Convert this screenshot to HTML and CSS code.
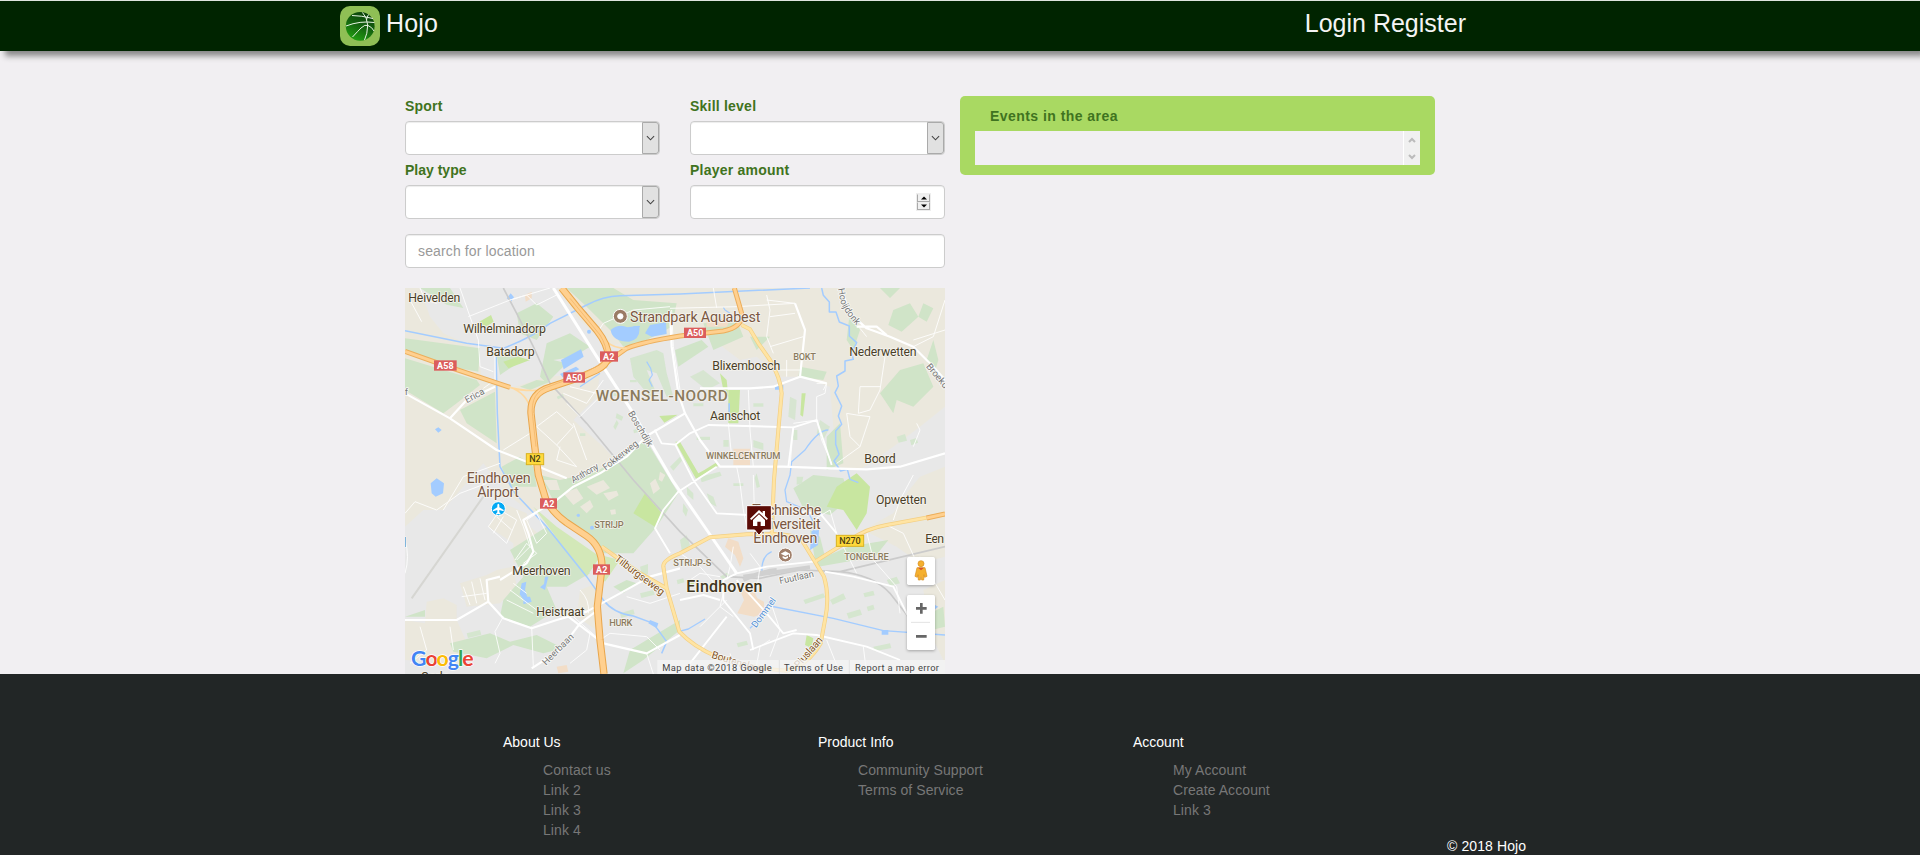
FILE: index.html
```html
<!DOCTYPE html>
<html lang="en">
<head>
<meta charset="utf-8">
<title>Hojo</title>
<link rel="stylesheet" href="styles.css">
</head>
<body>
<header class="topbar">
  <a class="brand">
    <svg class="logo" viewBox="0 0 40 40">
      <defs><linearGradient id="ball" x1="0.75" y1="0" x2="0.3" y2="1"><stop offset="0" stop-color="#0b3d0b"/><stop offset="0.5" stop-color="#14640f"/><stop offset="1" stop-color="#22a012"/></linearGradient></defs>
      <rect width="40" height="40" rx="10" fill="#8fbf55"/>
      <circle cx="20.2" cy="20.3" r="14.4" fill="url(#ball)"/>
      <g fill="none" stroke="#e6f2e2" stroke-width="1">
        <path d="M12 9.5Q21 9.5 33 12.5M6 20Q20 14.5 34.4 16.5M12.500 31Q18 25 21 22Q25 18 28 19.500Q32 21 34 25M22.500 6.500Q27 11 27.700 19Q27.500 28 24.500 34M28.500 8.500Q27 11 26.500 14"/>
      </g>
    </svg>
    <span>Hojo</span>
  </a>
  <nav class="nav"><a>Login</a> <a>Register</a></nav>
</header>

<main class="main">
  <section class="finder">
    <div class="fields">
      <div class="field"><label>Sport</label><div class="control"><span class="drop"><svg viewBox="0 0 10 6"><path d="M1 1l4 4 4-4"/></svg></span></div></div>
      <div class="field"><label>Skill level</label><div class="control"><span class="drop"><svg viewBox="0 0 10 6"><path d="M1 1l4 4 4-4"/></svg></span></div></div>
      <div class="field"><label class="tight">Play type</label><div class="control"><span class="drop"><svg viewBox="0 0 10 6"><path d="M1 1l4 4 4-4"/></svg></span></div></div>
      <div class="field"><label>Player amount</label><div class="control number"><span class="spin"><i><svg viewBox="0 0 6 4"><path d="M0 3.500L3 .5l3 3z"/></svg></i><i><svg viewBox="0 0 6 4"><path d="M0 .5h6l-3 3z"/></svg></i></span></div></div>
    </div>
    <input class="control search" type="text" placeholder="search for location">
    <svg class="map" viewBox="15 24 1620 1158">
      <rect x="15" y="24" width="1620" height="1158" fill="#e8e8e8"/>
      <g fill="#ebe8dd">
        <path d="M15 24H60L90 110 130 160 230 205 245 290 330 325 440 290 600 280 590 350 520 420 610 500 690 590 640 660 480 640 400 700 330 650 250 550 130 690 70 690 15 740z"/>
        <path d="M470 24H1635V380L1560 440 1480 500 1380 570 1310 560 1290 320 1200 290 1140 290 1070 230 1020 240 900 150 700 180 620 200 530 110z"/>
        <path d="M1480 700L1520 640 1560 590 1635 560V830L1560 850 1490 800 1390 750z"/>
        <path d="M1570 930L1635 900V1150L1590 1060z"/>
        <path d="M15 1020L75 1030 80 965 130 955 170 975 170 1020 210 1110 130 1150 15 1140zM180 910L260 885 290 870 340 860 350 920 300 970 200 980z"/>
        <path d="M265 740L310 670 380 700 390 740 440 780 430 810 340 850 340 790zM540 930l50-20 0 140-60-40z"/>
      </g>
      <g fill="#d0e4c8">
        <path d="M15 175L240 205 235 275 160 262 15 208zM15 235L230 300 240 315 170 370 130 400 15 330z"/>
        <path d="M180 390L285 335 290 490 200 430zM305 560L360 530 400 560 410 620 330 620z"/>
        <path d="M60 24h90l40 60-50-10zM350 100l60-30 50 40-50 70-50-20zM290 225l60-20 10 40-60 40zM360 320l50-20 40 5-60 25z"/>
        <path d="M500 24L640 24 700 60 830 70 815 140 740 180 670 200 640 160 560 80zM440 190l70-30 60 40-50 30-60 10 40 10-60 60-20-20z"/>
        <path d="M690 235l80-25 20 10 10 60 20 70-20 0-30-70-30-10 25 60-15 20-50-60z" opacity=".8"/>
        <path d="M420 585L480 600 590 575 730 480 750 500 835 640 770 740 700 820 600 820 560 770 480 700z"/>
        <path d="M330 810L440 740 570 880 500 920 440 920 470 990 390 1040 300 1010 310 960 370 890z"/>
        <path d="M825 210l80-30 20 20-90 60zM910 130l100-10 20 50-90 40zM1050 170l60 0-40 40z"/>
        <path d="M1200 260l80 15-10 25-75-10zM1280 470l40-40 10 120-50 20zM1350 90l30 60-20 60-20-30z"/>
        <path d="M1480 90l50-20 25 40-50 45-40-20zM1440 24h60l-30 30zM1570 70l30 15-20 40-25-15zM1600 180l15 60-15 50-20-50zM1500 270l70-20 30 70-60 60-50-20-10 40-40-60z"/>
        <path d="M1240 585l90 10 20 60-60 50-80-20-30-60zM1230 750l15 90 10 20 170-30 40-50-120 20-70 30-15-60zM1590 1000l40-20 5 60-40 10z"/>
        <path d="M15 1010l60-20 0 20zM150 1090l120-30 60 25 80-20 80 40-60 15-90-25-80 40-100-20zM640 920l40-20 30 10-40 30zM690 1110l150-90 0 30-110 90-60 40z"/>
        <path d="M1260 420l30 20-20 40-20-20zM1170 350l20 10-5 60-20-10zM870 290l40-20 50 40-40 20z" opacity=".7"/>
      </g>
      <g fill="#c8e6a0">
        <path d="M238 125l35-20 8 20-28 18zM310 245l45-15 35 10-65 25zM778 408l55-4-40 24zM826 485l14 0 55 95 18-10 35-22 6 10-66 38z"/>
        <path d="M700 700l35-60 52 62-20 40z"/>
        <path d="M400 680L470 740 600 830 560 890 490 800zM600 825l60 15-45 65-12-10z" fill="#d3e8b8"/>
        <path d="M985 330l35 0-5 100-30 0zM960 280l20 20 5 50-15-20zM1205 340l12 0-8 70-8-5z"/>
        <path d="M1310 620l60-40 40 40-10 80-30 50-40-60-50-10z"/>
        <path d="M1220 1065l20 10-5 30-20-10zM870 900l12-2 0 20-12 0z"/>
      </g>
      <g fill="#d5e6cf">
        <path d="M640 340h14v8h-14zM690 300h20v7h-20zM540 460h16v8h-16zM470 350l18-8 4 8-18 8zM890 470h40v10h-40zM970 480h16v20h-16zM1060 480l30 10v20l-30-8zM1180 450h12v30h-12zM880 370h30v9h-30zM1060 370h30v10h-30zM900 590l60-15 5 12-60 20zM1000 610h30v8h-30zM960 890l20-12 10 8-20 12zM1290 960l40-20 8 16-40 18zM1340 1000l40-12 6 16-40 12zM1400 980l20-6 4 14-20 6zM1210 960l60-20 6 12-60 20zM1460 900l30-10 10 20-30 8zM1420 1100l50-10 4 14-50 10zM830 900l20-5 3 12-20 6zM1010 1090l30-8 4 12-30 8zM1490 470l25-8 6 20-25 6zM1530 480l20-6 4 14-20 8zM1390 940l30-8 4 14-30 6zM660 1000l40-12 4 14-40 12zM720 940l40-10 4 14-40 10zM200 1060l40-10 4 14-40 10zM640 440l10-20 6 10-10 20zM700 450l30-10 0 12-28 8zM810 560l30-30 6 12-26 30zM650 400l20 10-5 12-18-8zM860 620l20 20 0 20-18-16zM920 640l20 10 10 30-20-10zM850 670l14 20-6 20-10-16zM1070 580l10 40-10 4-6-30zM840 780l20-14 10 30-24 20zM720 860l24-8 0 30-18 6zM1190 590l20 0-4 20-16 4z"/>
      </g>
      <g fill="#ebe8dd">
        <path d="M490 640l40-15 20 30-30 20zM540 680l30-20 10 20-20 20zM560 620l50-20 20 24-40 20zM610 640l40-8 6 14-30 16zM430 600l40 0 10 30-30 0zM750 610l16-14 14 30-20 16zM780 575l16 10-10 20-10-6zM630 690l16-2 2 14-14 2z"/>
      </g>
      <g fill="#f2ddc7">
        <path d="M1000 506h50v50h-50zM1022 935l30-20 20 40 20 10 0 35-30 10-50-10 20-40zM985 775l30 10 15 50-10 25-15-35-30-25zM920 110l70 10-10 20-60 0zM375 45l20-10 0 20-18 10zM470 1160l30-5 5 20-30 5z"/>
      </g>
      <g fill="#a3ccff">
        <path d="M632 150q25-20 50-8l35-5q8 40-30 48-50 0-55-35zM750 135l48-8 2 35-45 8-20-10zM483 240l60-32 8 22-60 38zM480 282l48-22 10 8-50 24zM320 55l12-15 10 12-8 12zM92 610l18-15 22 15-3 30-22 10-12-10zM105 448l10-6 10 8-10 8z"/>
        <path d="M365 910l14-5-4 25 10 30-8 8-18-25zM370 950l20 0 5 15-25 8zM435 890l10 0-10 40-15-8 12-10zM1235 752l22-2-3 45-24 15zM985 370h5v30h-5zM1125 315h25v14h-25zM1445 1050h20v14h-20zM750 1020l25 10-5 15-25-15zM1605 975l10 5-10 8z"/>
        <circle cx="535" cy="706" r="5"/><circle cx="576" cy="743" r="6"/><circle cx="555" cy="102" r="7"/><circle cx="567" cy="155" r="6"/>
      </g>
      <g fill="none" stroke="#a3ccff" stroke-width="4.500" stroke-linejoin="round">
        <path d="M15 152L200 190 310 205Q400 170 450 130L560 75Q610 48 660 47L840 42 1230 24"/>
        <path d="M288 205L292 400 300 560 345 640 440 740 560 890 610 960Q640 1000 700 1008L760 1030 800 1085 785 1120"/>
        <path d="M1265 24l5 22 18 20 0 30 20 0 10 30 30 12 0 30 22 20-15 30 5 20-25 5 0 30-25 15 5 30-10 20 20 40-10 30 10 25-18 20 0 40 10 30-15 20 20 30 20-5 8 30 25 10"/>
        <path d="M1285 450q-30 0-70 60l-40 35-5 40-15 45 5 35 60 25 20 35 5 75M1115 815q-35 15-28 70M1110 960q-10 40-60 85M1110 978L1300 1015 1450 1052 1635 1065M835 1055l30-8 50-30" stroke-width="4"/>
        <path d="M740 245l12 20 5 20-10 15 10 20M540 320l60-40M700 140l20 0M990 100l-15-10-5-8" stroke-width="3.500"/>
      </g>
      <g fill="none" stroke="#cbcbcb" stroke-width="5">
        <path d="M310 24L350 100 400 200 450 310 560 430 700 600 840 755 980 890 1080 895 1200 870 1320 875Q1420 885 1470 940L1540 1030M1320 875L1635 800"/>
        <path d="M250 650L35 955" stroke="#d6d6d2" stroke-width="6"/>
        <path d="M1030 890Q1100 880 1230 862M1030 900Q1090 872 1130 870" stroke-width="12" stroke="#d0d0d0"/>
      </g>
      <g class="minor">
        <path d="M30 60L65 125M60 24L75 60 110 70M180 24L210 110 235 180 240 260 280 275M205 110L330 60 450 24M330 60L380 45 410 75 470 45M285 205L285 300 250 325"/>
        <path d="M410 440L470 395 520 440 470 495 410 440M470 495L530 560 470 540 480 500M310 510L390 460M520 430L560 540M490 340L560 370 610 300M500 370L540 410 600 350M510 320L590 340"/>
        <path d="M590 160L610 130 700 90 810 80M815 90L820 200 840 330M940 24l10 60M810 85L1010 80 1185 70M1110 200L1210 170M1100 45L1110 90 1100 170 1120 220M1185 70L1100 60M1185 100L1110 110M1160 240L1160 290M1130 270H1200"/>
        <path d="M1635 60L1600 170 1540 200M1635 150L1540 180M1380 145L1400 170M1455 230L1440 330 1410 390 1375 400 1380 320 1440 320M1370 405L1340 400 1350 470 1380 500 1410 410 1370 405M1380 500L1310 550M1550 430L1560 450 1540 500M1250 310L1280 310 1275 340 1250 350V420L1180 430M1280 310L1270 330"/>
        <path d="M985 430L995 530M1045 330L1050 450 1060 560M1180 440L1170 560M1250 420L1265 480 1295 550M1010 560L1020 610 1030 690 1040 740M1060 585L1065 760"/>
        <path d="M265 740L300 690 350 720 320 790 265 740M290 710L335 750M280 760L310 710M350 690L370 740 390 800 350 840M380 720L410 700 440 760 410 790 380 720M345 840L380 790 410 820 370 850M190 920L210 975M215 905L230 970M240 895L255 960M185 950L260 940M130 690L190 590 300 550"/>
        <path d="M310 1010L285 1055 300 1120 285 1150M395 1040L400 1160M320 960L400 1000M330 930L410 990M340 910L380 940M60 1040L80 1110 30 1150M150 1040L160 1110M15 780Q30 830 15 880M15 700L45 665 110 690 180 640 260 610"/>
        <path d="M520 1010L600 1080 630 1060 740 1070 780 1110M680 950L750 970 840 940M570 1060L560 1110 510 1150M740 1120L760 1182M540 930Q570 960 565 1000"/>
        <path d="M840 820L900 860 970 940 960 980 1000 1010M870 900L900 880 960 890M900 1040L980 960M1000 800L990 860 980 900M1050 820L1080 860 1070 930M990 1120L1010 1182M1065 1180L1080 1100 1110 1080"/>
        <path d="M1110 960L1140 1050 1110 1130M1240 720L1290 690 1310 760 1370 880M1400 755L1420 840 1490 920 1500 1000M1460 735L1510 760 1560 870M1280 1080L1320 1180M1390 1100L1400 1182M1540 585L1500 660 1480 720M1560 830L1600 900 1635 960"/>
      </g>
      <g class="major">
        <path stroke-width="9" d="M460 24L590 230 700 400 820 605 910 735 1010 880"/>
        <path d="M15 340L150 415 290 510 380 545 500 595M150 415L200 360 285 320M300 900L380 850 400 815 385 760 370 720 470 660 520 620 600 580 680 530 740 468 855 400M15 1020H170L265 965 310 1015 395 1045 470 1020 560 995 660 940 750 890 840 865M265 965L260 900 300 890"/>
        <path d="M395 1165L480 1110 540 1030 600 985M505 1010L610 1090 740 1120 840 1065"/>
        <path d="M810 95L815 200 835 340 855 400 900 480 960 560 1150 560 1290 565 1400 568 1500 560 1635 520M900 325L1050 325 1120 320 1200 290 1215 150 1185 70M1200 290L1280 310M1325 30L1350 100 1400 145 1470 170 1540 200 1600 260 1635 300M1370 140L1430 140 1460 165"/>
        <path d="M764 449L785 490 826 494 880 600 950 700 1045 705M826 494L870 460 925 435 1180 442L1165 560M1180 442L1250 420 1295 555M835 635L950 560M835 635L790 690 765 745 810 820M1010 880L1100 860 1240 845M1010 880L970 900 970 960 1050 1060 1060 1110M1050 1110L1180 1060 1250 1065 1400 1100 1500 1140M870 1150L980 1010M1010 900L1100 1000 1150 1060 1190 1050M840 960L910 945 960 960M1275 875L1360 890 1480 920 1560 1080M1180 695L1260 700 1310 760" stroke-width="5.500"/>
      </g>
      <g class="yellow-edge">
        <path id="y1" d="M1025 135L1050 148 1075 190 1110 240Q1142 295 1145 340L1135 450 1122 600 1115 765"/>
        <path id="y2" d="M840 820Q788 840 790 860L800 925 838 1055Q880 1100 950 1130Q1050 1165 1160 1172Q1225 1155 1262 1090L1275 1020Q1290 950 1272 890L1245 845 1205 780Q1180 763 1120 762L1040 763 930 772 840 820"/>
        <path id="y3" d="M1245 845L1350 780Q1400 745 1460 735L1635 703M605 800L640 825 720 880 800 925"/>
      </g>
      <g class="yellow"><use href="#y1"/><use href="#y2"/><use href="#y3"/></g>
      <g class="orange thin-edge"><path id="o1" d="M15 214L150 262 330 322M1003 24L1025 100Q1030 140 970 153L840 168Q730 185 680 205L610 255M1580 714L1635 702"/></g>
      <g class="orange thin"><use href="#o1"/></g>
      <g fill="none" stroke="#ffd9a0" stroke-width="5"><path d="M330 322Q370 335 430 330M330 322Q380 340 390 385M620 185Q640 205 680 205M600 800L640 825"/></g>
      <g class="orange wide-edge"><path id="o2" d="M485 24L530 80 590 150Q625 195 625 230Q620 255 590 270L540 292 450 322Q390 340 393 400L403 490 415 585 438 660Q460 700 500 728L560 768Q606 800 606 860L592 980 600 1080 612 1182"/></g>
      <g class="orange wide"><use href="#o2"/></g>
      <path d="M510 55L600 165Q622 200 618 232Q605 255 540 285L450 318Q388 335 398 410L408 500" fill="none" stroke="#eeb264" stroke-width="2"/>

      <g class="badge red">
        <rect x="102" y="241" width="68" height="31"/><text x="111" y="267" textLength="50">A58</text>
        <rect x="490" y="277" width="65" height="31"/><text x="498" y="303" textLength="49">A50</text>
        <rect x="600" y="214" width="54" height="31"/><text x="609" y="239" textLength="34">A2</text>
        <rect x="852" y="143" width="66" height="31"/><text x="861" y="169" textLength="49">A50</text>
        <rect x="420" y="655" width="51" height="31"/><text x="429" y="680" textLength="34">A2</text>
        <rect x="579" y="853" width="51" height="31"/><text x="588" y="879" textLength="34">A2</text>
      </g>
      <g class="badge gold">
        <rect x="379" y="521" width="52" height="33"/><text x="388" y="547" textLength="34">N2</text>
        <rect x="1309" y="766" width="82" height="33"/><text x="1318" y="792" textLength="64">N270</text>
      </g>
      <g class="town">
        <text x="25" y="66" textLength="156">Heivelden</text>
        <text x="190" y="159" textLength="248">Wilhelminadorp</text>
        <text x="259" y="228" textLength="145">Batadorp</text>
        <text x="937" y="270" textLength="204">Blixembosch</text>
        <text x="1348" y="228" textLength="202">Nederwetten</text>
        <text x="930" y="420" textLength="151">Aanschot</text>
        <text x="1393" y="550" textLength="94">Boord</text>
        <text x="337" y="885" textLength="175">Meerhoven</text>
        <text x="409" y="1008" textLength="145">Heistraat</text>
        <text x="1428" y="672" textLength="152">Opwetten</text>
        <text x="1576" y="789" textLength="56">Een</text>
        <text x="62" y="1203">Oerle</text>
        <text x="10" y="800">l</text>
      </g>
      <g class="place">
        <text x="690" y="126" textLength="391">Strandpark Aquabest</text>
        <text x="200" y="610" textLength="192">Eindhoven</text>
        <text x="232" y="651" textLength="125">Airport</text>
        <text x="1057" y="705" textLength="207">Technische</text>
        <text x="1060" y="747" textLength="202">Universiteit</text>
        <text x="1060" y="789" textLength="192">Eindhoven</text>
      </g>
      <text class="city" x="859" y="937" textLength="228">Eindhoven</text>
      <text class="district" x="587" y="362" textLength="396">WOENSEL-NOORD</text>
      <g class="quarter">
        <text x="1180" y="240" textLength="68">BOKT</text>
        <text x="918" y="537" textLength="223">WINKELCENTRUM</text>
        <text x="583" y="744" textLength="88">STRIJP</text>
        <text x="820" y="858" textLength="114">STRIJP-S</text>
        <text x="628" y="1037" textLength="69">HURK</text>
        <text x="1333" y="839" textLength="133">TONGELRE</text>
      </g>
      <path id="hooijdonk" d="M1314 26L1320 60Q1330 95 1372 140" fill="none"/>
      <g class="street">
        <text transform="translate(201 370) rotate(-29)">Erica</text>
        <text transform="translate(683 400) rotate(59)" textLength="119">Boschdijk</text>
        <text transform="translate(520 610) rotate(-30)" textLength="90">Anthony</text>
        <text transform="translate(617 572) rotate(-38)" textLength="126">Fokkerweg</text>
        <text><textPath href="#hooijdonk">Hooijdonk</textPath></text>
        <text transform="translate(1577 260) rotate(50)">Broekd</text>
        <text transform="translate(438 1157) rotate(-45)" textLength="120">Heerbaan</text>
        <text transform="translate(1140 912) rotate(-12)" textLength="105">Fuutlaan</text>
        <text class="brown" transform="translate(642 840) rotate(37)" textLength="178">Tilburgseweg</text>
        <text class="brown" transform="translate(933 1133) rotate(17)" textLength="165">Boutenslaan</text>
        <text class="brown" transform="translate(1196 1166) rotate(-49)" textLength="112">Piuslaan</text>
        <text class="water" transform="translate(1068 1045) rotate(-54)" textLength="104">Dommel</text>
        <text x="14" y="346">f</text>
      </g>
      <g stroke="#fff" stroke-width="3">
        <circle cx="661" cy="109" r="21" fill="#9a7b64"/><circle cx="661" cy="109" r="8" fill="#fff"/>
        <circle cx="295" cy="686" r="21" fill="#03a9f4"/>
        <circle cx="1156" cy="825" r="21" fill="#a1806b"/>
      </g>
      <path d="M295 671q3 0 3 5v6l13 8v4l-13-4v7l4 4v3l-7-2-7 2v-3l4-4v-7l-13 4v-4l13-8v-6q0-5 3-5z" fill="#fff"/>
      <path d="M1142 821l14-7 14 7v10h-3v-8l-11 5zM1148 828l8 4 8-4v6l-8 4-8-4z" fill="#fff"/>
      <path d="M1040 677h74v73h-24l-13 16-13-16h-24z" fill="#5b0b06" stroke="#fff" stroke-width="3"/>
      <path d="M1077 690L1050 716l4 4 23-21 23 21 4-4-9-9v-14h-7v7zM1077 703l-18 17v18h13v-13h10v13h13v-18z" fill="#fff"/>

      <text class="google" x="33" y="1159" textLength="188"><tspan fill="#4285f4">G</tspan><tspan fill="#ea4335">o</tspan><tspan fill="#fbbc05">o</tspan><tspan fill="#4285f4">g</tspan><tspan fill="#34a853">l</tspan><tspan fill="#ea4335">e</tspan></text>
      <rect x="772" y="1140" width="863" height="42" fill="#f5f5f5" opacity=".75"/>
      <path d="M1138 1140v42M1348 1140v42" stroke="#e2e2e2" stroke-width="3"/>
      <g class="legal">
        <text x="787" y="1172" textLength="328">Map data ©2018 Google</text>
        <text x="1152" y="1172" textLength="177">Terms of Use</text>
        <text x="1365" y="1172" textLength="252">Report a map error</text>
      </g>
      <g class="widget">
        <rect x="1521" y="831" width="84" height="84" rx="5"/>
        <rect x="1521" y="945" width="84" height="165" rx="5"/>
      </g>
      <path d="M1533 1027h57" stroke="#e3e3e3" stroke-width="3"/>
      <path d="M1548 985h32M1564 969v32M1548 1069h32" stroke="#666" stroke-width="8"/>
      <g fill="#f5b02e" stroke="#d78d1c" stroke-width="2">
        <path d="M1551 863h24l6 26-7 3-2-8-1 16h-6l-1-8-2 0-1 8h-6l-1-16-2 8-7-3z"/><circle cx="1563" cy="851" r="9"/>
      </g>
      <path d="M1554 863h18l-9 8z" fill="#d9502b"/>
    </svg>
  </section>

  <aside class="events">
    <h2>Events in the area</h2>
    <div class="list">
      <div class="scroll"><svg viewBox="0 0 8 6"><path d="M1 5l3-3 3 3"/></svg><svg viewBox="0 0 8 6"><path d="M1 1l3 3 3-3"/></svg></div>
    </div>
  </aside>
</main>

<footer class="footer">
  <div class="links">
    <div><h3>About Us</h3><ul><li>Contact us</li><li>Link 2</li><li>Link 3</li><li>Link 4</li></ul></div>
    <div><h3>Product Info</h3><ul><li>Community Support</li><li>Terms of Service</li></ul></div>
    <div><h3>Account</h3><ul><li>My Account</li><li>Create Account</li><li>Link 3</li></ul></div>
  </div>
  <p class="copy">© 2018 Hojo</p>
</footer>
</body>
</html>
```
FILE: styles.css
```css
* { box-sizing: border-box; }
body {
  margin: 0;
  height: 855px;
  overflow: hidden;
  background: #f1eff2;
  font: 14px/20px "Liberation Sans", Arial, sans-serif;
}
.topbar {
  position: relative;
  display: flex;
  justify-content: space-between;
  height: 51px;
  padding: 5px 454px 0 340px;
  border-top: 1px solid #dfe5df;
  background: #002400;
  box-shadow: 5px 5px 6px #888;
  color: #f4f4f4;
  font-size: 25px;
}
.brand { display: flex; gap: 6px; line-height: 35px; letter-spacing: .2px; }
.logo { width: 40px; height: 40px; }
.nav { line-height: 34px; }
.main {
  display: flex;
  align-items: flex-start;
  gap: 15px;
  height: 623px;
  padding: 45px 0 0 405px;
}
.finder { width: 540px; }
.fields {
  display: grid;
  grid-template-columns: 255px 255px;
  column-gap: 30px;
  row-gap: 5px;
}
.field label {
  display: block;
  height: 20px;
  margin-bottom: 5px;
  color: #3f7320;
  font-weight: bold;
  letter-spacing: .22px;
}
.field .tight { letter-spacing: 0; }
.control {
  display: flex;
  justify-content: flex-end;
  height: 34px;
  border: 1px solid #ccc;
  border-radius: 4px;
  background: #fff;
  box-shadow: inset 0 1px 1px rgba(0, 0, 0, .075);
}
.drop {
  display: flex;
  align-items: center;
  justify-content: center;
  width: 17px;
  padding-right: 1px;
  border: 1px solid #aaa;
  border-radius: 0 3px 3px 0;
  background: #e1e1e1;
}
.drop svg { width: 9px; height: 6px; fill: none; stroke: #444; stroke-width: 1.2; }
.number { align-items: center; padding-right: 13px; }
.spin { display: grid; width: 15px; height: 18px; border: 1px solid #eee; }
.spin i {
  display: flex;
  align-items: center;
  justify-content: center;
  border: 1px solid #aaa;
  border-top-color: #eee;
  background: #f0f0f0;
}
.spin svg { width: 6px; height: 4px; }
.search {
  width: 100%;
  margin-top: 15px;
  padding: 0 12px;
  color: #555;
  font: inherit;
  letter-spacing: .13px;
}
.search::placeholder { color: #999; opacity: 1; }
.map { display: block; width: 540px; height: 386px; margin-top: 20px; }
.map text { font-family: Roboto, sans-serif; paint-order: stroke; stroke-linejoin: round; }
.minor { fill: none; stroke: #fff; stroke-width: 3; stroke-linejoin: round; opacity: .85; }
.major { fill: none; stroke: #fff; stroke-width: 6.5; stroke-linejoin: round; }
.yellow-edge { fill: none; stroke: #f3cf83; stroke-width: 12; stroke-linejoin: round; }
.yellow { fill: none; stroke: #ffe4a3; stroke-width: 8; }
.orange { fill: none; stroke-linejoin: round; }
.thin-edge { stroke: #ecae5b; stroke-width: 15; }
.thin { stroke: #ffd08f; stroke-width: 9; }
.wide-edge { stroke: #e9a64c; stroke-width: 22; }
.wide { stroke: #ffd08f; stroke-width: 16; }
.badge text { fill: #fff; font-size: 27px; font-weight: bold; }
.red rect { fill: #db5d5d; }
.gold rect { fill: #ffd93c; stroke: #d8b220; stroke-width: 3; }
.gold text { fill: #4b4113; font-weight: 500; }
.town text { fill: #4a3f28; font-size: 37px; stroke: #f5f3ee; stroke-width: 5; }
.place text { fill: #7a5742; font-size: 43px; stroke: #f7f5f0; stroke-width: 5; }
.map .city { fill: #3f3520; font-size: 48px; font-weight: 500; stroke: #f5f3ee; stroke-width: 6; }
.map .district { fill: #8b7b5e; font-size: 46px; font-weight: 500; stroke: #f5f3ee; stroke-width: 5; }
.quarter text { fill: #8b7b5e; font-size: 28px; font-weight: 500; stroke: #f5f3ee; stroke-width: 4; }
.street text { fill: #777; font-size: 28px; stroke: #f8f8f6; stroke-width: 5; }
.street .brown { fill: #85561c; font-size: 31px; }
.street .water { fill: #4f8fd6; }
.map .google { font-family: Lato, sans-serif; font-size: 64px; font-weight: bold; stroke: #fff; stroke-width: 4; }
.legal text { fill: #444; font-size: 28px; }
.widget rect { fill: #fff; filter: drop-shadow(0 3px 4px rgba(0, 0, 0, .3)); }
.events {
  width: 475px;
  height: 79px;
  padding: 10px 15px;
  border-radius: 5px;
  background: #a9d962;
}
.events h2 {
  margin: 0 15px 5px;
  color: #3f7320;
  font-size: 14px;
  line-height: 20px;
  letter-spacing: .45px;
}
.list { display: flex; justify-content: flex-end; height: 34px; background: #f1eff2; }
.scroll {
  display: flex;
  flex-direction: column;
  align-items: center;
  justify-content: space-between;
  width: 17px;
  padding: 6px 1px 5px 0;
  border-left: 1px solid #fff;
  background: #f0f0f0;
}
.scroll svg { width: 8px; height: 6px; fill: none; stroke: #bbb; stroke-width: 2; }
.footer { height: 181px; padding: 58px 0 0 503px; background: #222626; color: #fff; }
.links { display: grid; grid-template-columns: repeat(3, 315px); height: 104px; }
.links h3 { margin: 0 0 8px; font-size: 14px; font-weight: normal; }
.links ul { margin: 0; padding: 0 0 0 40px; color: #777; list-style: none; letter-spacing: .08px; }
.copy { margin: 0 0 0 944px; letter-spacing: .1px; }
```
